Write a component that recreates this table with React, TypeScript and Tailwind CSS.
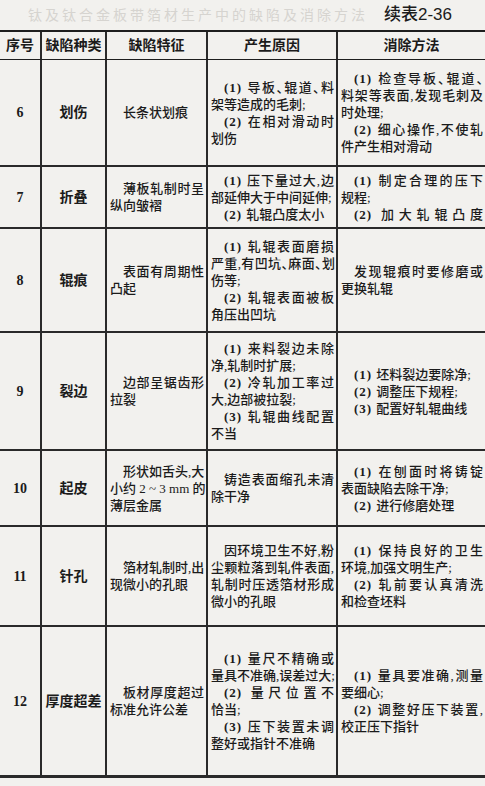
import clsx from "clsx";

type Row = {
  n: string;
  name: string;
  h: string;
  feat: string[];
  cause: string[];
  fix: string[];
};

// " " at the start = first-line indent, "$" at the end = don't justify, "|" = force justify
const rows: Row[] = [
  {
    n: "6",
    name: "划伤",
    h: "h-[107px]",
    feat: [" 长条状划痕"],
    cause: [" (1) 导板、辊道、料", "架等造成的毛刺;", " (2) 在相对滑动时", "划伤"],
    fix: [" (1) 检查导板、辊道、", "料架等表面,发现毛刺及", "时处理;", " (2) 细心操作,不使轧", "件产生相对滑动"],
  },
  {
    n: "7",
    name: "折叠",
    h: "h-[62px]",
    feat: [" 薄板轧制时呈", "纵向皱褶"],
    cause: [" (1) 压下量过大,边", "部延伸大于中间延伸;", " (2) 轧辊凸度太小"],
    fix: [" (1) 制定合理的压下", "规程;", " (2) 加大轧辊凸度|"],
  },
  {
    n: "8",
    name: "辊痕",
    h: "h-[104px]",
    feat: [" 表面有周期性", "凸起"],
    cause: [" (1) 轧辊表面磨损", "严重,有凹坑、麻面、划", "伤等;", " (2) 轧辊表面被板", "角压出凹坑"],
    fix: [" 发现辊痕时要修磨或", "更换轧辊"],
  },
  {
    n: "9",
    name: "裂边",
    h: "h-[118px]",
    feat: [" 边部呈锯齿形", "拉裂"],
    cause: [
      " (1) 来料裂边未除",
      "净,轧制时扩展;",
      " (2) 冷轧加工率过",
      "大,边部被拉裂;",
      " (3) 轧辊曲线配置",
      "不当",
    ],
    fix: [" (1) 坯料裂边要除净;", " (2) 调整压下规程;", " (3) 配置好轧辊曲线"],
  },
  {
    n: "10",
    name: "起皮",
    h: "h-[76px]",
    feat: [" 形状如舌头,大", "小约 2 ~ 3 mm 的", "薄层金属"],
    cause: [" 铸造表面缩孔未清", "除干净"],
    fix: [" (1) 在刨面时将铸锭", "表面缺陷去除干净;", " (2) 进行修磨处理"],
  },
  {
    n: "11",
    name: "针孔",
    h: "h-[100px]",
    feat: [" 箔材轧制时,出", "现微小的孔眼"],
    cause: [" 因环境卫生不好,粉", "尘颗粒落到轧件表面,", "轧制时压透箔材形成", "微小的孔眼"],
    fix: [" (1) 保持良好的卫生", "环境,加强文明生产;", " (2) 轧前要认真清洗", "和检查坯料"],
  },
  {
    n: "12",
    name: "厚度超差",
    h: "h-[151px]",
    feat: [" 板材厚度超过", "标准允许公差"],
    cause: [
      " (1) 量尺不精确或",
      "量具不准确,误差过大;",
      " (2) 量尺位置不",
      "恰当;",
      " (3) 压下装置未调",
      "整好或指针不准确",
    ],
    fix: [" (1) 量具要准确,测量", "要细心;", " (2) 调整好压下装置,", "校正压下指针"],
  },
];

function Lines({ lines }: { lines: string[] }) {
  return (
    <div className="flex flex-col justify-center h-full pl-[3px] pr-[2px] leading-[17px]">
      {lines.map((raw, i) => {
        const indent = raw.startsWith(" ");
        const stop = raw.endsWith("$");
        const force = raw.endsWith("|");
        const text = raw.trim().replace(/[$|]$/, "");
        const next = lines[i + 1];
        const justify = force || (!stop && next !== undefined && !next.startsWith(" "));
        const m = text.match(/^(\(\d\))\s*(.*)$/);
        return (
          <div
            key={i}
            className={clsx(
              "whitespace-nowrap",
              indent && "pl-[13px]",
              justify && "[text-align-last:justify]",
              text.startsWith("严重") && "tracking-[-1px]"
            )}
          >
            {m ? (
              <>
                <span className="font-bold tracking-[1px] pr-[4px]">{m[1]}</span>
                {m[2]}
              </>
            ) : (
              text
            )}
          </div>
        );
      })}
    </div>
  );
}

export default function App() {
  return (
    <div className="w-[485px] h-[786px] overflow-hidden bg-[#f2f1ee] text-[#1b1b1b] font-['Liberation_Serif','Noto_Sans_CJK_SC',serif] [font-feature-settings:'halt']">
      <div className="h-[30px] flex items-center justify-between pl-[28px] pr-[33px]">
        <span className="text-[14px] tracking-[3px] text-[#d6d4d0]">
          钛及钛合金板带箔材生产中的缺陷及消除方法
        </span>
        <span className="text-[17px] font-medium font-['Liberation_Sans','Noto_Sans_CJK_SC',sans-serif]">
          续表2-36
        </span>
      </div>

      <div className="grid grid-cols-[40px_65px_101px_130px_1fr] h-[30px] border-t-2 border-b border-[#1e1e1e] text-[14px] font-bold items-stretch">
        <div className="flex items-center justify-center">序号</div>
        <div className="flex items-center justify-center border-l-2 border-[#2a2a2a]">缺陷种类</div>
        <div className="flex items-center justify-center border-l-2 border-[#2a2a2a]">缺陷特征</div>
        <div className="flex items-center justify-center border-l-2 border-[#2a2a2a]">产生原因</div>
        <div className="flex items-center justify-center border-l-2 border-[#2a2a2a]">消除方法</div>
      </div>

      {rows.map((r, i) => (
        <div
          key={r.n}
          className={clsx(
            "grid grid-cols-[40px_65px_101px_130px_1fr] border-[#2a2a2a] text-[13px] font-medium",
            r.h,
            i === rows.length - 1 ? "border-b-[3px]" : "border-b-2"
          )}
        >
          <div className="flex items-center justify-center text-[14px] font-bold">{r.n}</div>
          <div className="flex items-center justify-center border-l-2 border-[#2a2a2a] text-[14px] font-bold">
            {r.name}
          </div>
          <div className="border-l-2 border-[#2a2a2a]">
            <Lines lines={r.feat} />
          </div>
          <div className="border-l-2 border-[#2a2a2a]">
            <Lines lines={r.cause} />
          </div>
          <div className="border-l-2 border-[#2a2a2a]">
            <Lines lines={r.fix} />
          </div>
        </div>
      ))}
    </div>
  );
}
